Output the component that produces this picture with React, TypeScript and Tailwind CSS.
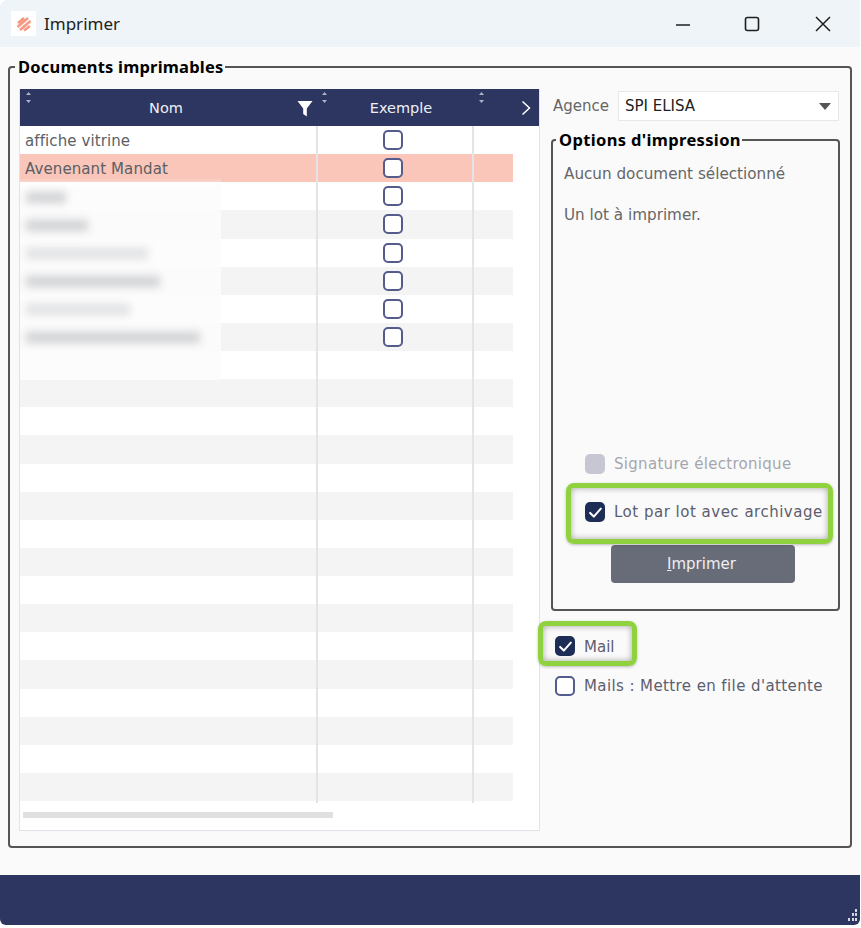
import React from "react";

const font = { fontFamily: '"DejaVu Sans", "Liberation Sans", sans-serif' };
const sans = { fontFamily: '"Noto Sans", "Liberation Sans", sans-serif' };

function Check({ checked = false, disabled = false }: { checked?: boolean; disabled?: boolean }) {
  if (disabled) return <span className="block w-[20px] h-[20px] rounded-[5px] bg-[#c6c7d3] shrink-0" />;
  if (checked)
    return (
      <span className="flex items-center justify-center w-[20px] h-[20px] rounded-[5px] bg-[#1d2d55] shrink-0">
        <svg width="15" height="15" viewBox="0 0 14 14" fill="none">
          <path d="M2 7.4 5.4 10.8 12 3.4" stroke="#fff" strokeWidth="1.9" strokeLinecap="round" strokeLinejoin="round" />
        </svg>
      </span>
    );
  return <span className="block w-[20px] h-[20px] rounded-[5px] border-2 border-[#555c8c] bg-white shrink-0" />;
}

function Sort({ className }: { className: string }) {
  return (
    <svg className={className} width="7" height="11" viewBox="0 0 7 11" fill="#aeb3c8">
      <path d="M3.5 0 6 3H1z" />
      <path d="M3.5 11 1 8h5z" />
    </svg>
  );
}

const rows = Array.from({ length: 24 }, (_, i) => i);
const labels: Record<number, string> = { 0: "affiche vitrine", 1: "Avenenant Mandat" };
const blurred = [
  "w-[40px]",
  "w-[62px]",
  "w-[122px]",
  "w-[134px]",
  "w-[104px]",
  "w-[174px]",
];

export default function App() {
  return (
    <div className="w-[861px] h-[928px] bg-white overflow-hidden" style={font}>
      <div className="w-[860px] h-[925px] flex flex-col bg-[#fafafa] rounded-b-[6px] rounded-tl-[8px] overflow-hidden">
        <header className="h-[47px] shrink-0 bg-[#eff4f8] flex items-center pl-[11px]" style={sans}>
          <span className="w-[25px] h-[25px] bg-white flex items-center justify-center">
            <svg width="18" height="18" viewBox="0 0 18 18" fill="none" stroke="#f79a83" strokeWidth="2.6">
              <path d="M3 8 9 3M2.500 12 13 3M5 15 15.500 6M9 15.500 15 11" />
            </svg>
          </span>
          <span className="ml-[8px] text-[17px] text-[#222]">Imprimer</span>
          <div className="ml-auto flex items-center text-[#1f1f1f]">
            <svg className="mr-[53px]" width="16" height="16" viewBox="0 0 16 16" stroke="currentColor" strokeWidth="1.500">
              <path d="M1 9h14" />
            </svg>
            <svg className="mr-[55px]" width="16" height="16" viewBox="0 0 16 16" fill="none" stroke="currentColor" strokeWidth="1.600">
              <rect x="1.500" y="1.500" width="13" height="13" rx="2" />
            </svg>
            <svg className="mr-[29px]" width="16" height="16" viewBox="0 0 16 16" stroke="currentColor" strokeWidth="1.500">
              <path d="M1 1l14 14M15 1 1 15" />
            </svg>
          </div>
        </header>

        <fieldset className="mx-[8px] mt-[9px] h-[792px] shrink-0 border-2 border-[#555] rounded-[4px] pl-[9px] pr-[10px] flex">
          <legend className="ml-[-4px] pl-[3px] pr-[2px] text-[16.5px] leading-[21px] font-bold text-black tracking-[0.2px]" style={sans}>
            Documents imprimables
          </legend>
          <div className="flex w-full pt-[12px] pb-[16px]">
            {/* table */}
            <div className="w-[521px] shrink-0 h-[742px] bg-white border border-[#e2e2ea] border-t-0 flex flex-col relative">
              <div className="h-[37px] shrink-0 bg-[#2d3561] grid grid-cols-[296px_157px_1fr] text-[#eef0f6] text-[14.5px]">
                <div className="relative flex items-center justify-center border-r border-[#2d3561]">
                  <Sort className="absolute left-[5px] top-[3px]" />
                  <span className="ml-[-3px] pt-[2px]">Nom</span>
                  <svg className="absolute right-[2px] top-[11px]" width="16" height="17" viewBox="0 0 16 17" fill="#fff">
                    <path d="M0.500 1h15L9.800 8.500v8L6.200 14V8.500z" />
                  </svg>
                </div>
                <div className="relative flex items-center justify-center">
                  <Sort className="absolute left-[5px] top-[3px]" />
                  <span className="ml-[13px] pt-[2px]">Exemple</span>
                  <Sort className="absolute right-[-12px] top-[3px]" />
                </div>
                <div className="relative flex items-center justify-end pr-[8px]">
                  <svg width="10" height="16" viewBox="0 0 10 16" fill="none" stroke="#fff" strokeWidth="1.500">
                    <path d="M1.500 1.500 8.500 8l-7 6.500" />
                  </svg>
                </div>
              </div>

              <div className="relative w-[493px]">
                {rows.map((i) => (
                  <div
                    key={i}
                    className={`h-[28.13px] grid grid-cols-[296px_157px_40px] items-center text-[15px] tracking-[0.1px] text-[#5b5f66] ${
                      i === 1 ? "bg-[#f9c6b9]" : i % 2 === 1 ? "bg-[#f4f4f4]" : "bg-white"
                    }`}
                  >
                    <span className="pl-[5px] pt-[3px] leading-none">{labels[i] ?? ""}</span>
                    <span className="flex justify-center pr-[3px]">{i < 8 ? <Check /> : null}</span>
                    <span />
                  </div>
                ))}
                <span className="absolute left-[296px] top-0 bottom-[-2px] w-[2px] bg-[#e3e3e8]" />
                <span className="absolute left-[452px] top-0 bottom-[-2px] w-[2px] bg-[#e3e3e8]" />
                <div className="absolute left-0 top-[52px] w-[201px] h-[202px] bg-gradient-to-b from-transparent to-[#fcfcfc]/90 to-[6%] pt-[5px]">
                  {blurred.map((w, i) => (
                    <div key={w} className="h-[28.13px] flex items-center pl-[6px]">
                      <span className={`block h-[11px] ${w} ${i === 2 || i === 4 ? "bg-[#e0e1e3]" : "bg-[#d0d1d4]"} blur-[4px]`} />
                    </div>
                  ))}
                </div>
              </div>

              <div className="mt-[11px] ml-[3px] w-[310px] h-[6px] bg-[#e0e0e0]" />
            </div>

            {/* right panel */}
            <div className="flex-1 min-w-0 pl-[11px] pt-[2px] flex flex-col">
              <div className="flex items-center h-[30px] pl-[2px] mr-[1px]">
                <span className="text-[15px] text-[#666] pt-[1px]">Agence</span>
                <div className="ml-[9px] flex-1 h-[30px] bg-white border border-[#e8e8e8] flex items-center pl-[6px] pr-[7px] text-[15px] text-[#222]">
                  SPI ELISA
                  <svg className="ml-auto" width="12" height="7" viewBox="0 0 12 7" fill="#555">
                    <path d="M0 0h12L6 7z" />
                  </svg>
                </div>
              </div>

              <fieldset className="mt-[8px] h-[482px] border-2 border-[#555] rounded-[4px] flex">
                <legend className="ml-[3px] pl-[3px] pr-[1px] text-[16.500px] leading-[21px] font-bold text-black tracking-[0.35px]" style={sans}>
                  Options d'impression
                </legend>
                <div className="w-full h-[459px] flex flex-col text-[15.2px] text-[#666] pl-[11px] pt-[13px]">
                  <p className="leading-[22px]">Aucun document sélectionné</p>
                  <p className="mt-[19px] leading-[22px]">Un lot à imprimer.</p>
                  <div className="mt-auto flex items-center gap-[9px] pl-[21px] text-[#a5a7ad] h-[24px] text-[15px] tracking-[0.3px]">
                    <Check disabled />
                    <span className="pt-[1px]">Signature électronique</span>
                  </div>
                  <div className="relative mt-[24px] flex items-center gap-[9px] pl-[21px] h-[24px] text-[#5c5e70] text-[15px] tracking-[0.5px]">
                    <Check checked />
                    <span className="pt-[1px]">Lot par lot avec archivage</span>
                    <span className="absolute left-[2px] top-[-17px] w-[267px] h-[61px] border-[5px] border-[#8fd23e] rounded-[8px] shadow-[inset_0_0_6px_rgba(0,0,0,0.35),0_1px_3px_rgba(0,0,0,0.25)]" />
                  </div>
                  <div className="mt-[21px] mb-[26px] ml-[47px] w-[184px] h-[38px] bg-[#686c78] rounded-[4px] flex items-center justify-center text-[#eeeef2] text-[15px]">
                    <span className="pt-[1px] mr-[3px]"><span className="underline">I</span>mprimer</span>
                  </div>
                </div>
              </fieldset>

              <div className="relative mt-[23px] flex items-center gap-[9px] pl-[4px] h-[24px] text-[15px] text-[#5c5e70]">
                <Check checked />
                <span className="pt-[2px]">Mail</span>
                <span className="absolute left-[-13px] top-[-13px] w-[99px] h-[45px] border-[5px] border-[#8fd23e] rounded-[8px] shadow-[inset_0_0_6px_rgba(0,0,0,0.35),0_1px_3px_rgba(0,0,0,0.25)]" />
              </div>
              <div className="mt-[16px] flex items-center gap-[9px] pl-[4px] h-[24px] text-[15px] tracking-[0.4px] text-[#5c5e70]">
                <Check />
                <span className="pt-[1px]">Mails : Mettre en file d'attente</span>
              </div>
            </div>
          </div>
        </fieldset>

        <div className="flex-1" />
        <footer className="relative h-[50px] shrink-0 bg-[#2d3561]">
          <svg className="absolute right-[2px] bottom-[3px]" width="14" height="14" viewBox="0 0 14 14" fill="#d5d8e2">
            <rect x="11" y="1" width="2" height="3" />
            <rect x="8" y="5" width="2" height="3" />
            <rect x="11" y="5" width="2" height="3" />
            <rect x="4" y="10" width="2" height="3" />
            <rect x="8" y="10" width="2" height="3" />
            <rect x="11" y="10" width="2" height="3" />
          </svg>
        </footer>
      </div>
    </div>
  );
}
